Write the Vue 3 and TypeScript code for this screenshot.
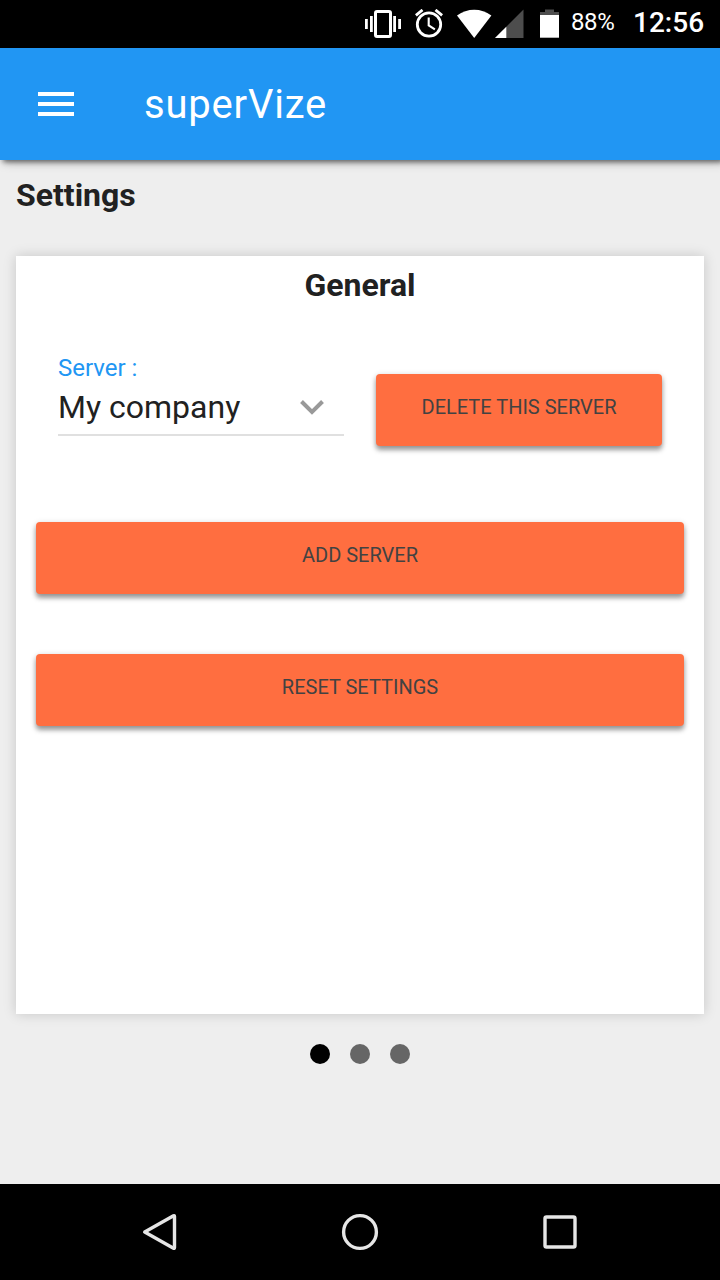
<script setup lang="ts">
import { ref } from 'vue'

const server = ref<string>('My company')
const slides: number[] = [0, 1, 2]
const active = ref<number>(0)
</script>

<template>
  <div class="screen">
    <div class="status">
      <svg class="vibrate" width="36" height="28" viewBox="0 0 36 28">
        <rect x="10.5" y="1.5" width="15" height="25" rx="1.5" fill="none" stroke="#fff" stroke-width="3" />
        <path d="M1.4 9v10M6.4 6v16M29.6 6v16M34.6 9v10" stroke="#fff" stroke-width="2.8" />
      </svg>
      <svg class="alarm" width="28" height="29" viewBox="0 0 28 29">
        <circle cx="14" cy="15.5" r="11.7" fill="none" stroke="#fff" stroke-width="2.8" />
        <path d="M.9 6.400 7.500.9M20.500.9l6.600 5.500" stroke="#fff" stroke-width="2.800" fill="none" />
        <path d="M13.700 8.500v8l6.200 3.800" fill="none" stroke="#fff" stroke-width="2.100" />
      </svg>
      <svg class="wifi" width="35" height="29" viewBox="0 0 35 29">
        <path d="M17.200 29 0 6.500Q8 .7 17.200.7T34.400 6.500Z" fill="#fff" />
      </svg>
      <svg class="signal" width="29" height="29" viewBox="0 0 29 29">
        <path d="M0 29 28.500.5V29Z" fill="#4d4d4d" />
        <path d="M0 29 11.300 17.700V29Z" fill="#fff" />
      </svg>
      <svg class="battery" width="19" height="29" viewBox="0 0 19 29">
        <path d="M5 .5h9V3h5v4H0V3h5Z" fill="#4d4d4d" />
        <path d="M0 6h19v22.700H0Z" fill="#fff" />
      </svg>
      <span class="percent">88%</span>
      <span class="clock">12:56</span>
    </div>
    <header class="toolbar">
      <button class="menu" aria-label="Menu"><i></i><i></i><i></i></button>
      <span class="brand">superVize</span>
    </header>
    <main class="content">
      <h1>Settings</h1>
      <section class="card">
        <h2>General</h2>
        <div class="server-row">
          <div class="field">
            <div class="label">Server :</div>
            <div class="value">
              <span>{{ server }}</span>
              <svg width="24" height="15" viewBox="0 0 24 15">
                <path d="M1.500 1.500 12 12l10.500-10.500" fill="none" stroke="#999" stroke-width="4" />
              </svg>
            </div>
          </div>
          <button class="btn delete"><span>DELETE THIS SERVER</span></button>
        </div>
        <button class="btn add"><span>ADD SERVER</span></button>
        <button class="btn reset"><span>RESET SETTINGS</span></button>
      </section>
      <div class="dots">
        <span v-for="s in slides" :key="s" :class="{ active: s === active }"></span>
      </div>
    </main>
    <nav class="navbar">
      <svg width="40" height="40" viewBox="0 0 40 40">
        <path d="M4.700 20 33.500 3.800Q34.500 3.300 34.500 4.500v31q0 1.200-1 .7Z" />
      </svg>
      <svg width="40" height="40" viewBox="0 0 40 40"><circle cx="20" cy="20" r="16.400" /></svg>
      <svg width="40" height="40" viewBox="0 0 40 40"><rect x="5" y="5" width="30" height="30" rx="1.500" /></svg>
    </nav>
  </div>
</template>

<style>
body {
  margin: 0;
}
</style>

<style scoped>
.screen {
  width: 720px;
  height: 1280px;
  display: flex;
  flex-direction: column;
  overflow: hidden;
  background: #eee;
  color: #212121;
  font-family: Roboto, sans-serif;
}
.screen * {
  box-sizing: border-box;
}
svg {
  display: block;
  flex: none;
}
button {
  border: 0;
  padding: 0;
  margin: 0;
  font-family: inherit;
}
.status {
  height: 48px;
  flex: none;
  display: flex;
  align-items: flex-start;
  padding: 9px 0 0 365px;
  background: #000;
  color: #fff;
  white-space: nowrap;
}
.vibrate {
  margin-top: 1px;
}
.alarm {
  margin-left: 14px;
}
.wifi {
  margin-left: 14px;
}
.signal {
  margin-left: 3px;
}
.battery {
  margin-left: 16px;
}
.percent {
  margin-left: 12px;
  width: 62px;
  font-size: 24px;
  line-height: 27px;
  letter-spacing: -0.4px;
}
.clock {
  font-size: 28px;
  line-height: 28px;
  font-weight: 500;
}
.toolbar {
  height: 112px;
  flex: none;
  display: flex;
  align-items: center;
  padding-left: 38px;
  background: #2196f3;
  color: #fff;
  box-shadow: 4px 2px 10px rgba(0, 0, 0, 0.26), 3px 2px 5px rgba(0, 0, 0, 0.5);
  position: relative;
}
.menu {
  width: 36px;
  height: 24px;
  display: flex;
  flex-direction: column;
  justify-content: space-between;
  background: none;
}
.menu i {
  width: 36px;
  height: 4px;
  background: #fff;
}
.brand {
  margin: 2px 0 0 70px;
  font-size: 40px;
  line-height: 48px;
  letter-spacing: 0.8px;
}
.content {
  flex: 1;
  padding: 0 16px;
}
h1,
h2 {
  margin: 0;
  font-size: 32px;
  font-weight: 700;
}
h1 {
  height: 96px;
  padding-top: 16px;
  line-height: 38px;
}
.card {
  height: 758px;
  padding: 10px 20px 0;
  background: #fff;
  box-shadow: 0 0 12px rgba(0, 0, 0, 0.17);
}
h2 {
  line-height: 38px;
  text-align: center;
}
.server-row {
  display: flex;
  gap: 32px;
  height: 148px;
  margin: 50px 22px 0;
}
.field {
  width: 286px;
  height: 82px;
  border-bottom: 2px solid #e0e0e0;
}
.label {
  height: 30px;
  font-size: 24px;
  line-height: 28px;
  color: #2196f3;
}
.value {
  display: flex;
  align-items: center;
  justify-content: space-between;
  height: 46px;
  padding-right: 20px;
  font-size: 32px;
  line-height: 38px;
}
.btn {
  display: block;
  height: 72px;
  border-radius: 4px;
  background: #ff6e40;
  box-shadow: 0 4px 5px rgba(0, 0, 0, 0.36), 0 1px 6px rgba(0, 0, 0, 0.14);
  color: #424242;
  font-size: 20px;
  line-height: 24px;
  padding-bottom: 6px;
}
.delete {
  width: 286px;
  margin-top: 20px;
}
.add,
.reset {
  width: 100%;
}
.add {
  margin-top: 20px;
}
.reset {
  margin-top: 60px;
}
.dots {
  display: flex;
  justify-content: center;
  gap: 20px;
  margin-top: 30px;
}
.dots span {
  width: 20px;
  height: 20px;
  border-radius: 50%;
  background: #666;
}
.dots .active {
  background: #000;
}
.navbar {
  height: 96px;
  flex: none;
  display: flex;
  align-items: center;
  justify-content: space-between;
  padding: 0 140px;
  background: #000;
}
.navbar svg {
  fill: none;
  stroke: #e6e6e6;
  stroke-width: 3.4;
  stroke-linejoin: round;
}
</style>
